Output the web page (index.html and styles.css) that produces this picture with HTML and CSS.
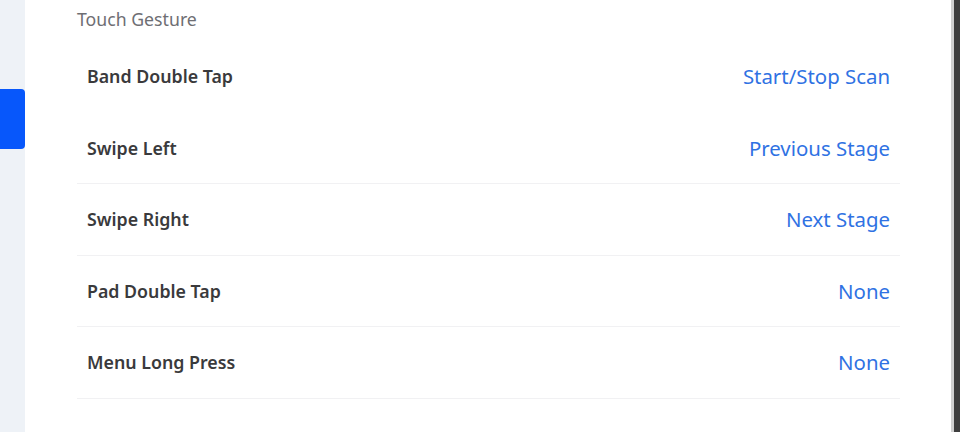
FILE: index.html
```html
<!DOCTYPE html>
<html lang="en">
<head>
    <meta charset="UTF-8">
    <meta name="viewport" content="width=device-width, initial-scale=1.0">
    <title>Touch Gesture</title>
    <link rel="stylesheet" href="styles.css">
</head>
<body>
    <div class="app">
        <div class="sidebar">
            <div class="tab"></div>
        </div>
        <div class="panel">
            <h3 class="section-title">Touch Gesture</h3>
            <div class="list">
                <div class="row first">
                    <span class="label">Band Double Tap</span>
                    <span class="value">Start/Stop Scan</span>
                </div>
                <div class="row">
                    <span class="label">Swipe Left</span>
                    <span class="value">Previous Stage</span>
                </div>
                <div class="row">
                    <span class="label">Swipe Right</span>
                    <span class="value">Next Stage</span>
                </div>
                <div class="row">
                    <span class="label">Pad Double Tap</span>
                    <span class="value">None</span>
                </div>
                <div class="row">
                    <span class="label">Menu Long Press</span>
                    <span class="value">None</span>
                </div>
            </div>
        </div>
        <div class="edge">
            <div class="edge-line"></div>
            <div class="edge-dark"></div>
        </div>
    </div>
</body>
</html>
```

FILE: styles.css
```css
html, body {
    margin: 0;
    width: 960px;
    height: 432px;
    overflow: hidden;
}
body {
    font-family: "Noto Sans", "Open Sans", sans-serif;
    background-color: #fff;
}
.app {
    display: flex;
    width: 960px;
    height: 432px;
}
.sidebar {
    flex: none;
    width: 25px;
    background-color: #eef2f7;
    padding-top: 89px;
}
.tab {
    height: 60px;
    background-color: #0757fb;
    border-radius: 0 4px 4px 0;
}
.panel {
    flex: 1;
    min-width: 0;
    background-color: #fff;
    padding: 0 51px 0 52px;
}
.section-title {
    margin: 0;
    padding-top: 6px;
    height: 35px;
    font-size: 17.7px;
    font-weight: 400;
    color: #6e6e73;
    line-height: 26px;
}
.row {
    box-sizing: border-box;
    display: flex;
    justify-content: space-between;
    align-items: center;
    height: 71.5px;
    padding: 0 10px;
    border-bottom: 1.5px solid #f1f1f3;
}
.row.first {
    border-bottom-color: transparent;
}
.label {
    font-size: 17.8px;
    font-weight: 600;
    color: #3a3a3c;
}
.value {
    font-size: 20.4px;
    color: #2f72e3;
}
.edge {
    flex: none;
    display: flex;
    width: 9px;
}
.edge-line {
    width: 3px;
    background-color: #d0d0d0;
}
.edge-dark {
    flex: 1;
    background-color: #3e3e3e;
}
```
